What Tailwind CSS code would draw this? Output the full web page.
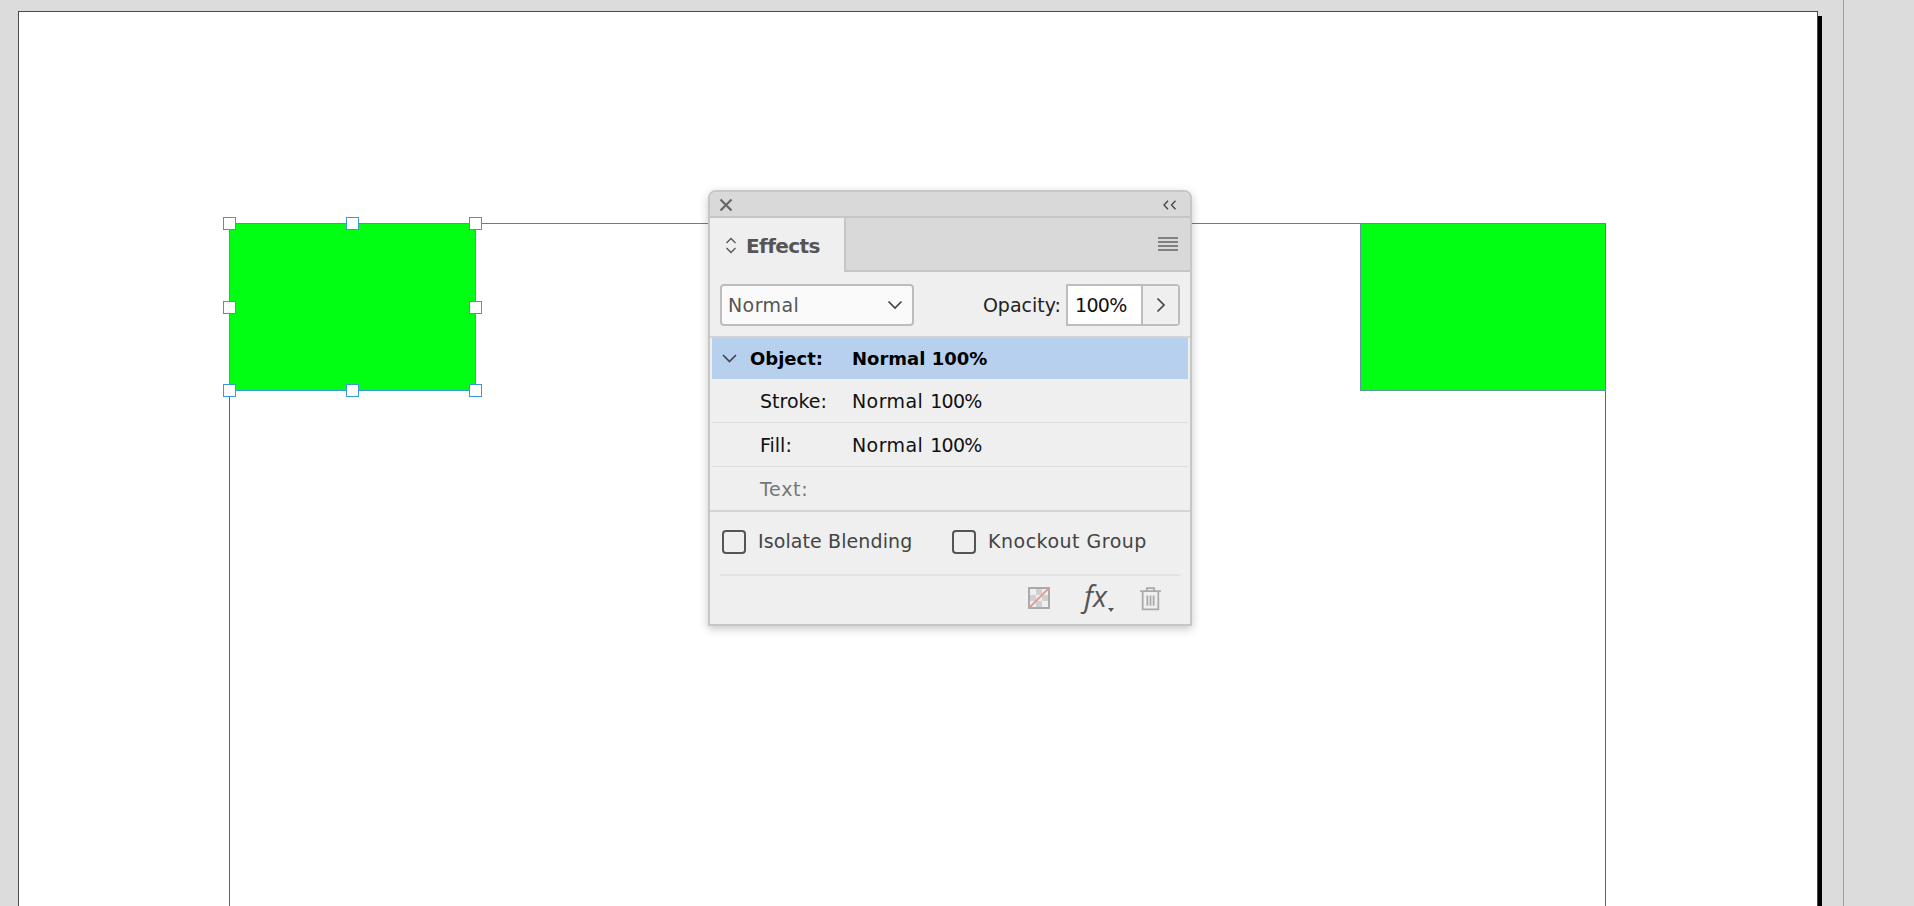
<!doctype html>
<html>
<head>
<meta charset="utf-8">
<script src="https://cdn.jsdelivr.net/npm/@tailwindcss/browser@4"></script>
</head>
<body class="m-0 overflow-hidden">
<div class="relative w-[1914px] h-[906px] overflow-hidden bg-[#dcdcdc] font-['DejaVu_Sans',sans-serif]">
  <!-- page -->
  <div class="absolute left-[22px] top-[16px] w-[1800px] h-[900px] bg-black"></div>
  <div class="absolute left-[18px] top-[11px] w-[1800px] h-[900px] bg-white border border-[#4a4a4a]"></div>
  <div class="absolute left-[1843px] top-0 w-px h-[906px] bg-[#e0808c]"></div>
  <!-- guides -->
  <div class="absolute left-[476px] top-[223px] w-[884px] h-px bg-[#d838c8]"></div>
  <div class="absolute left-[229px] top-[390px] w-px h-[516px] bg-[#a030d0]"></div>
  <div class="absolute left-[1605px] top-[390px] w-px h-[516px] bg-[#a030d0]"></div>
  <!-- green frames -->
  <div class="absolute left-[229px] top-[223px] w-[247px] h-[168px] bg-[#00ff12] border border-[#3a9ad9]"></div>
  <div class="absolute left-[1360px] top-[223px] w-[246px] h-[168px] bg-[#00ff12] border border-[#5a9a9a] border-t-[#d048d0] border-r-[#8a60c0]"></div>
  <!-- handles -->
  <div class="absolute left-[223px] top-[217px] w-[13px] h-[13px] bg-white border border-[#3a9ad9]"></div>
  <div class="absolute left-[346px] top-[217px] w-[13px] h-[13px] bg-white border border-[#3a9ad9]"></div>
  <div class="absolute left-[469px] top-[217px] w-[13px] h-[13px] bg-white border border-[#3a9ad9]"></div>
  <div class="absolute left-[223px] top-[301px] w-[13px] h-[13px] bg-white border border-[#3a9ad9]"></div>
  <div class="absolute left-[469px] top-[301px] w-[13px] h-[13px] bg-white border border-[#3a9ad9]"></div>
  <div class="absolute left-[223px] top-[384px] w-[13px] h-[13px] bg-white border border-[#3a9ad9]"></div>
  <div class="absolute left-[346px] top-[384px] w-[13px] h-[13px] bg-white border border-[#3a9ad9]"></div>
  <div class="absolute left-[469px] top-[384px] w-[13px] h-[13px] bg-white border border-[#3a9ad9]"></div>

  <!-- panel -->
  <div class="absolute left-[708px] top-[190px] w-[484px] h-[436px] flex flex-col bg-[#efefef] border-2 border-[#c6c6c6] rounded-t-[8px] shadow-[0_3px_10px_rgba(0,0,0,0.22)]">
    <!-- title bar -->
    <div class="h-[26px] shrink-0 flex items-center justify-between pt-[2px] pl-[9px] pr-[13px] bg-[#d9d9d9] border-b-2 border-[#c6c6c6] rounded-t-[6px]">
      <svg width="14" height="14" viewBox="0 0 14 14" fill="none" stroke="#666" stroke-width="2.2"><path d="M1.500 1.500 12.500 12.500M12.500 1.500 1.500 12.500"/></svg>
      <svg width="14" height="10" viewBox="0 0 14 10" fill="none" stroke="#444" stroke-width="1.300"><path d="M5 .8 1 5l4 4.200M12.500 .8 8.500 5l4 4.200"/></svg>
    </div>
    <!-- tab row -->
    <div class="h-[54px] shrink-0 flex bg-[#d9d9d9] border-b-2 border-[#c6c6c6]">
      <div class="w-[136px] h-[54px] flex items-center gap-[9px] pl-[15px] pt-[1px] bg-[#efefef] border-r-2 border-[#c6c6c6]">
        <svg width="12" height="17" viewBox="0 0 12 17" fill="none" stroke="#555" stroke-width="1.300"><path d="M1.500 6 6 1.500 10.500 6M1.500 11 6 15.500 10.500 11"/></svg>
        <span class="text-[20px] leading-none font-bold text-[#555] tracking-[-0.6px]">Effects</span>
      </div>
      <div class="flex-1 flex items-center justify-end pr-[12px]">
        <div class="w-[20px] h-[14px] flex flex-col justify-between">
          <div class="h-[2px] bg-[#808080]"></div><div class="h-[2px] bg-[#808080]"></div><div class="h-[2px] bg-[#808080]"></div><div class="h-[2px] bg-[#808080]"></div>
        </div>
      </div>
    </div>
    <!-- blend + opacity -->
    <div class="h-[64px] shrink-0 flex items-center justify-between pt-[1px] px-[10px]">
      <div class="w-[194px] h-[42px] flex items-center justify-between pl-[6px] pr-[9px] bg-[#fafafa] border-2 border-[#bdbdbd] rounded-[4px]">
        <span class="text-[19px] pt-[2px] text-[#555] tracking-[0.4px]">Normal</span>
        <svg width="16" height="10" viewBox="0 0 16 10" fill="none" stroke="#444" stroke-width="1.700"><path d="M1.500 1.500 8 8l6.500-6.500"/></svg>
      </div>
      <div class="flex items-center gap-[5px]">
        <span class="text-[19px] pt-[2px] text-[#222]">Opacity:</span>
        <div class="w-[114px] h-[42px] flex border-2 border-[#bdbdbd] rounded-r-[4px]">
          <div class="w-[75px] flex items-center pl-[7px] pt-[2px] bg-white border-r-2 border-[#bdbdbd] text-[19px] text-[#111] tracking-[-0.7px]">100%</div>
          <div class="flex-1 flex items-center justify-center bg-[#efefef]">
            <svg width="10" height="16" viewBox="0 0 10 16" fill="none" stroke="#444" stroke-width="1.700"><path d="M1.500 1.500 8 8l-6.500 6.500"/></svg>
          </div>
        </div>
      </div>
    </div>
    <!-- list -->
    <div class="h-[176px] shrink-0 flex flex-col px-[2px] border-t-2 border-b-2 border-[#d4d4d4] text-[19px]">
      <div class="h-[41px] shrink-0 flex items-center bg-[#b6d0ee] font-bold text-[18px] text-black">
        <span class="w-[15px] ml-[10px] mr-[13px] flex">
          <svg width="15" height="9" viewBox="0 0 15 9" fill="none" stroke="#445" stroke-width="1.700"><path d="M1 1l6.500 6.500L14 1"/></svg>
        </span>
        <span class="w-[102px]">Object:</span><span>Normal 100%</span>
      </div>
      <div class="h-[44px] shrink-0 flex items-center pt-[2px] pl-[48px] border-b border-[#dcdcdc] text-[#111]"><span class="w-[92px]">Stroke:</span><span class="tracking-[0.4px]">Normal</span><span class="ml-[7px] tracking-[-0.7px]">100%</span></div>
      <div class="h-[44px] shrink-0 flex items-center pt-[2px] pl-[48px] border-b border-[#dcdcdc] text-[#111]"><span class="w-[92px]">Fill:</span><span class="tracking-[0.4px]">Normal</span><span class="ml-[7px] tracking-[-0.7px]">100%</span></div>
      <div class="h-[43px] shrink-0 flex items-center pt-[2px] pl-[48px] text-[#777] tracking-[0.7px]">Text:</div>
    </div>
    <!-- checkboxes -->
    <div class="h-[62px] shrink-0 flex items-center pb-[3px] pl-[12px] text-[19px] text-[#444]">
      <div class="w-[24px] h-[24px] border-2 border-[#555] rounded-[4px] mr-[12px]"></div>
      <span class="w-[194px] tracking-[0.1px]">Isolate Blending</span>
      <div class="w-[24px] h-[24px] border-2 border-[#555] rounded-[4px] mr-[12px]"></div>
      <span class="tracking-[0.5px]">Knockout Group</span>
    </div>
    <!-- footer -->
    <div class="mx-[10px] h-[50px] flex items-center justify-end pb-[4px] border-t-2 border-[#e3e3e3] pr-[18px]">
      <div class="relative w-[22px] h-[22px] mr-[34px] border-2 border-[#aaa] bg-[conic-gradient(#d0d0d0_25%,#efefef_0_50%,#d0d0d0_0_75%,#efefef_0)] bg-[length:12px_12px]">
        <svg class="absolute -left-[2px] -top-[2px]" width="22" height="22" viewBox="0 0 22 22" fill="none" stroke="#e89a9a" stroke-width="2"><path d="M1 21 21 1"/></svg>
      </div>
      <div class="relative w-[26px] h-[26px] mr-[29px]">
        <span class="absolute left-0 top-[-4px] text-[29px] leading-none italic font-medium font-['Open_Sans',sans-serif] text-[#555]">fx</span>
        <div class="absolute left-[24px] top-[23px] w-0 h-0 border-x-[3px] border-x-transparent border-t-[4px] border-t-[#555]"></div>
      </div>
      <svg width="23" height="25" viewBox="0 0 22 24" fill="none" stroke="#aaa" stroke-width="1.700"><path d="M1 5h20M7.500 5V2h7v3M3.500 5v17.500h15V5M8 9v10M11 9v10M14 9v10"/></svg>
    </div>
  </div>
</div>
</body>
</html>
